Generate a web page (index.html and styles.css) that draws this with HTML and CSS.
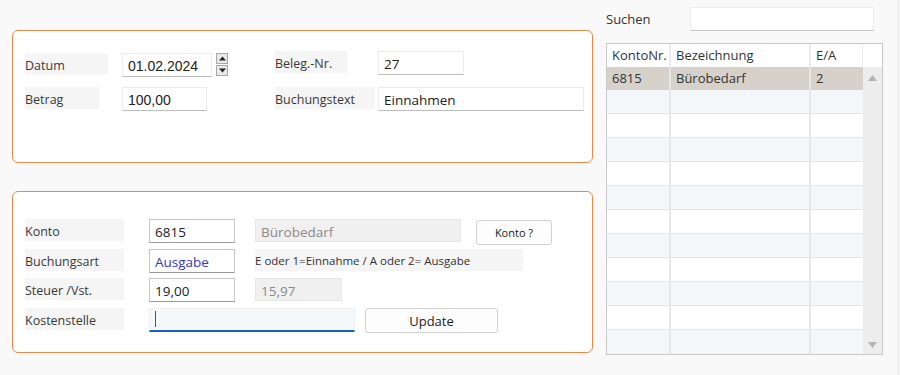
FILE: index.html
```html
<!DOCTYPE html>
<html>
<head>
<meta charset="utf-8">
<link rel="stylesheet" href="styles.css">
</head>
<body>
<div class="app">
  <div class="left">
    <div class="panel panel-top">
      <div class="row r1">
        <div class="group g1">
          <div class="label w83">Datum</div>
          <div class="field date w90">01.02.2024</div>
          <div class="spin">
            <div class="spin-btn"><svg width="7" height="5" viewBox="0 0 7 5"><path d="M0 4.5 L3.5 0.5 L7 4.5Z" fill="#222"/></svg></div>
            <div class="spin-btn"><svg width="7" height="5" viewBox="0 0 7 5"><path d="M0 0.5 L3.5 4.5 L7 0.5Z" fill="#222"/></svg></div>
          </div>
        </div>
        <div class="group g2 up2">
          <div class="label w72">Beleg.-Nr.</div>
          <div class="field w86">27</div>
        </div>
      </div>
      <div class="row r2">
        <div class="group g1">
          <div class="label w74">Betrag</div>
          <div class="field date w85">100,00</div>
        </div>
        <div class="group g2">
          <div class="label w100">Buchungstext</div>
          <div class="field w206">Einnahmen</div>
        </div>
      </div>
    </div>
    <div class="panel panel-bottom">
      <div class="row2">
        <div class="label w99">Konto</div>
        <div class="field boxed w86">6815</div>
        <div class="ro w206">Bürobedarf</div>
        <div class="btn small w76">Konto ?</div>
      </div>
      <div class="row2">
        <div class="label w99">Buchungsart</div>
        <div class="field boxed w86 blue">Ausgabe</div>
        <div class="hint w268">E oder 1=Einnahme / A oder 2= Ausgabe</div>
      </div>
      <div class="row2">
        <div class="label w99">Steuer /Vst.</div>
        <div class="field boxed w86">19,00</div>
        <div class="ro w87">15,97</div>
      </div>
      <div class="row2">
        <div class="label w99">Kostenstelle</div>
        <div class="field focus w206"><span class="caret"></span></div>
        <div class="btn w133">Update</div>
      </div>
    </div>
  </div>
  <div class="right">
    <div class="search">
      <div class="search-label">Suchen</div>
      <div class="search-input"></div>
    </div>
    <div class="grid">
      <div class="grid-body">
        <div class="grow head"><div class="c c1">KontoNr.</div><div class="c c2">Bezeichnung</div><div class="c c3">E/A</div></div>
        <div class="grow sel"><div class="c c1">6815</div><div class="c c2">Bürobedarf</div><div class="c c3">2</div></div>
        <div class="grow alt"><div class="c c1"></div><div class="c c2"></div><div class="c c3"></div></div>
        <div class="grow"><div class="c c1"></div><div class="c c2"></div><div class="c c3"></div></div>
        <div class="grow alt"><div class="c c1"></div><div class="c c2"></div><div class="c c3"></div></div>
        <div class="grow"><div class="c c1"></div><div class="c c2"></div><div class="c c3"></div></div>
        <div class="grow alt"><div class="c c1"></div><div class="c c2"></div><div class="c c3"></div></div>
        <div class="grow"><div class="c c1"></div><div class="c c2"></div><div class="c c3"></div></div>
        <div class="grow alt"><div class="c c1"></div><div class="c c2"></div><div class="c c3"></div></div>
        <div class="grow"><div class="c c1"></div><div class="c c2"></div><div class="c c3"></div></div>
        <div class="grow alt"><div class="c c1"></div><div class="c c2"></div><div class="c c3"></div></div>
        <div class="grow"><div class="c c1"></div><div class="c c2"></div><div class="c c3"></div></div>
        <div class="grow alt last"><div class="c c1"></div><div class="c c2"></div><div class="c c3"></div></div>
      </div>
      <div class="scroll">
        <div class="scroll-top"></div>
        <div class="scroll-track">
          <svg width="9" height="6" viewBox="0 0 9 6"><path d="M0 6 L4.5 0 L9 6Z" fill="#b4b4b4"/></svg>
          <svg width="9" height="6" viewBox="0 0 9 6"><path d="M0 0 L4.5 6 L9 0Z" fill="#b4b4b4"/></svg>
        </div>
      </div>
    </div>
  </div>
  <div class="edge"></div>
</div>
</body>
</html>
```
FILE: styles.css
```css
* { box-sizing: border-box; }
html, body { margin: 0; padding: 0; }
body {
  background: #f9f9f9;
  font-family: "Open Sans", "Noto Sans", sans-serif;
  font-size: 12.5px;
  color: #333;
  width: 900px;
  height: 375px;
  overflow: hidden;
}
.app {
  display: flex;
  padding: 7px 0 0 12px;
  height: 375px;
}
.left {
  width: 581px;
  padding-top: 23px;
  display: flex;
  flex-direction: column;
  gap: 28px;
}
.panel {
  background: #fff;
  border: 1.5px solid #e8894a;
  border-radius: 6px;
}
.panel-top {
  height: 133px;
  padding: 22px 0 0 12px;
}
.panel-bottom {
  height: 162px;
  padding: 27px 0 0 12px;
  display: flex;
  flex-direction: column;
  gap: 6px;
}
.row { display: flex; height: 24px; }
.r2 { margin-top: 10px; }
.group { display: flex; align-items: flex-start; }
.g1 { width: 250px; }
.g2 { flex: 1; }
.up2 { margin-top: -2px; }
.label {
  height: 22px;
  line-height: 25px;
  background: #f5f5f5;
  padding-left: 0;
  color: #3a3a3a;
  flex: none;
  overflow: hidden;
}
.g1 .label { margin-right: 14px; }
.g1 .w83 { width: 83px; }
.g1 .w74 { width: 74px; margin-right: 23px; }
.g2 .label { margin-right: 31px; }
.g2 .w100 { margin-right: 3px; }
.w72 { width: 72px; }
.w83 { width: 83px; }
.w74 { width: 74px; }
.w85 { width: 85px; }
.w86 { width: 86px; }
.w87 { width: 87px; }
.w90 { width: 90px; }
.w99 { width: 99px; }
.w100 { width: 100px; }
.w206 { width: 206px; }
.w268 { width: 268px; }
.w76 { width: 76px; }
.w133 { width: 133px; }
.field {
  height: 24px;
  line-height: 24px;
  background: #fff;
  border: 1px solid #ececec;
  border-bottom: 1px solid #bdbdbd;
  padding-left: 5px;
  font-size: 13.5px;
  color: #222;
  flex: none;
}
.field.date {
  font-family: "Liberation Sans", Arial, sans-serif;
  font-size: 14px;
}
.spin {
  margin-left: 4px;
  display: flex;
  flex-direction: column;
  gap: 1px;
}
.spin-btn {
  width: 12px;
  height: 11px;
  background: #e9e9e9;
  border: 1px solid #a8a8a8;
  display: flex;
  align-items: center;
  justify-content: center;
}
.row2 { display: flex; align-items: flex-start; height: 23.5px; }
.row2 .label { margin-right: 25px; }
.row2 .field { margin-right: 20px; }
.field.boxed { border: 1px solid #c6c6c6; border-bottom-color: #9a9a9a; }
.field.blue { color: #3434c8; }
.ro {
  height: 23px;
  line-height: 24px;
  background: #f0f0f0;
  border: 1px solid #e6e6e6;
  color: #8a8a8a;
  padding-left: 5px;
  font-size: 13.5px;
  flex: none;
}
.row2 .ro.w206 { margin-right: 15px; }
.hint {
  height: 22px;
  line-height: 23px;
  background: #f5f5f5;
  font-size: 11.5px;
  color: #333;
  flex: none;
}
.btn {
  height: 25px;
  line-height: 24px;
  background: #fdfdfd;
  border: 1px solid #d0d0d0;
  border-radius: 3px;
  text-align: center;
  color: #222;
  font-size: 13px;
  flex: none;
}
.btn.small { font-size: 11px; margin-top: 1px; }
.field.focus {
  background: #f5f8fb;
  border: 1px solid #eef1f4;
  border-bottom: 2px solid #1a5fc4;
  margin-right: 10px !important;
  display: flex;
  align-items: center;
  padding-left: 5px;
}
.caret { width: 1px; height: 16px; background: #555; }
.right {
  margin-left: 13px;
  width: 277px;
  display: flex;
  flex-direction: column;
}
.search {
  display: flex;
  align-items: center;
  height: 24px;
}
.search-label { width: 84px; color: #333; font-size: 13px; }
.search-input {
  width: 184px;
  height: 24px;
  background: #fff;
  border: 1px solid #ececec;
  border-bottom: 1px solid #c4c4c4;
}
.grid {
  margin-top: 12px;
  width: 277px;
  height: 312px;
  border: 1px solid #c9c9c9;
  display: flex;
  background: #fff;
}
.grid-body { width: 256px; display: flex; flex-direction: column; }
.grow { display: flex; height: 24px; border-bottom: 1px solid #e6e6e6; }
.grow.head { height: 23px; border-bottom: none; }
.grow.sel { background: #d6d2cb; height: 23px; border-bottom: none; }
.grow.alt { background: #f4f7fa; }
.grow.last { border-bottom: none; }
.c { height: 100%; line-height: 23px; padding-left: 5px; font-size: 13px; color: #333; }
.c1 { width: 64px; border-right: 2px solid #e6e6e6; }
.c2 { width: 140px; border-right: 2px solid #e6e6e6; }
.c3 { flex: 1; }
.grow.head .c { border-right-color: #ececec; }
.grow.head .c3 { border-right: 1px solid #ececec; }
.scroll { flex: 1; display: flex; flex-direction: column; }
.scroll-top { height: 23px; background: #fff; }
.scroll-track {
  flex: 1;
  background: #ededed;
  display: flex;
  flex-direction: column;
  justify-content: space-between;
  align-items: center;
  padding: 8px 0 6px;
}
.edge {
  position: absolute;
  left: 897px;
  top: 0;
  width: 3px;
  height: 375px;
  background: #f0f0f0;
}
```
